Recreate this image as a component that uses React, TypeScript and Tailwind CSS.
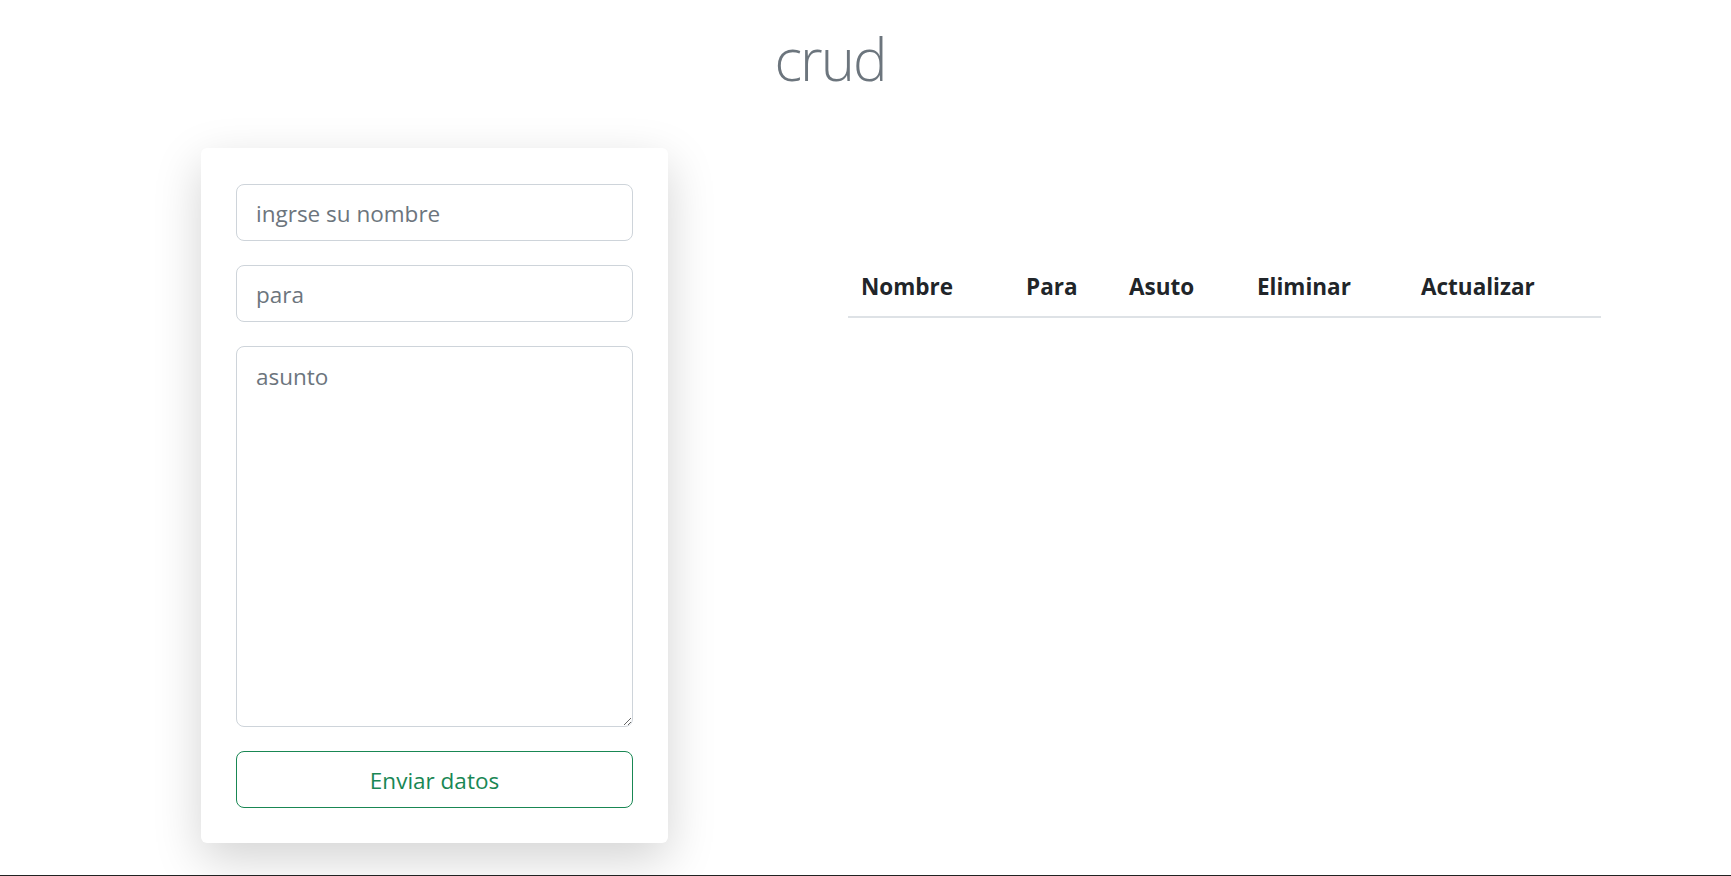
import { useState } from "react";

type Row = { nombre: string; para: string; asunto: string };

const columns = [
  { label: "Nombre", width: "w-[165px]" },
  { label: "Para", width: "w-[103px]" },
  { label: "Asuto", width: "w-[128px]" },
  { label: "Eliminar", width: "w-[164px]" },
  { label: "Actualizar", width: "w-[193px]" },
];

export default function App() {
  const [nombre, setNombre] = useState("");
  const [para, setPara] = useState("");
  const [asunto, setAsunto] = useState("");
  const [rows, setRows] = useState<Row[]>([]);

  const handleSubmit = (e: React.FormEvent) => {
    e.preventDefault();
    if (!nombre) return;
    setRows((prev) => [...prev, { nombre, para, asunto }]);
    setNombre("");
    setPara("");
    setAsunto("");
  };

  return (
    <div className="h-screen bg-white border-b border-[#222] font-['Open_Sans',sans-serif] overflow-hidden">
      {/* Title */}
      <div className="w-[1660px] h-[148px] pt-[23px] text-center">
        <h1 className="text-[58px] leading-[72px] font-light text-[#6c757d] tracking-[-2px]">
          crud
        </h1>
      </div>

      <div className="flex items-start">
        {/* Form card */}
        <form
          onSubmit={handleSubmit}
          className="ml-[201px] w-[467px] bg-white rounded-md shadow-[0_16px_48px_rgba(0,0,0,0.175)] pt-[36px] pb-[35px] px-[35px] flex flex-col gap-[24px]"
        >
          <input
            value={nombre}
            onChange={(e) => setNombre(e.target.value)}
            placeholder="ingrse su nombre"
            className="h-[57px] w-full rounded-lg border border-[#ced4da] px-[19px] pt-[2px] text-[22.5px] text-[#212529] placeholder:text-[#6c757d] outline-none"
          />
          <input
            value={para}
            onChange={(e) => setPara(e.target.value)}
            placeholder="para"
            className="h-[57px] w-full rounded-lg border border-[#ced4da] px-[19px] pt-[2px] text-[22.5px] text-[#212529] placeholder:text-[#6c757d] outline-none"
          />
          <textarea
            value={asunto}
            onChange={(e) => setAsunto(e.target.value)}
            placeholder="asunto"
            className="h-[381px] w-full rounded-lg border border-[#ced4da] px-[19px] pt-[13px] text-[22.5px] leading-[1.5] text-[#212529] placeholder:text-[#6c757d] outline-none"
          />
          <button
            type="submit"
            className="h-[57px] w-full rounded-lg border border-[#198754] pt-[2px] text-[22.5px] text-[#198754] bg-white"
          >
            Enviar datos
          </button>
        </form>

        {/* Table */}
        <table className="ml-[180px] mt-[113px] w-[753px] border-collapse text-[#212529]">
          <thead>
            <tr className="border-b-2 border-[#dee2e6]">
              {columns.map((c) => (
                <th
                  key={c.label}
                  className={`${c.width} text-left px-[13px] pt-2 pb-[11px] text-[22.5px] leading-[36px] font-bold`}
                >
                  {c.label}
                </th>
              ))}
            </tr>
          </thead>
          <tbody>
            {rows.map((r, i) => (
              <tr key={i} className="border-b border-[#dee2e6]">
                <td className="px-[13px] py-2">{r.nombre}</td>
                <td className="px-[13px] py-2">{r.para}</td>
                <td className="px-[13px] py-2">{r.asunto}</td>
                <td className="px-[13px] py-2">
                  <button
                    onClick={() => setRows((prev) => prev.filter((_, j) => j !== i))}
                    className="text-[#dc3545]"
                  >
                    Eliminar
                  </button>
                </td>
                <td className="px-[13px] py-2">
                  <button className="text-[#0d6efd]">Actualizar</button>
                </td>
              </tr>
            ))}
          </tbody>
        </table>
      </div>
    </div>
  );
}
